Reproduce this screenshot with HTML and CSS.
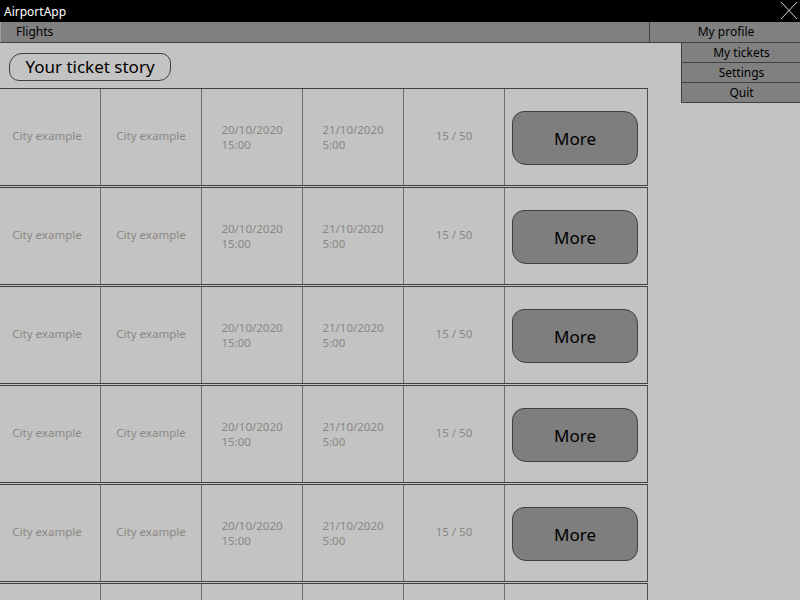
FILE: index.html
```html
<!DOCTYPE html>
<html lang="en">
<head>
<meta charset="utf-8">
<title>AirportApp</title>
<link rel="stylesheet" href="styles.css">
</head>
<body>
<div class="titlebar">
  <span class="app-name">AirportApp</span>
  <svg class="close" width="18" height="19" viewBox="0 0 18 19"><path d="M1 1 L17 18 M17 1 L1 18" stroke="#d8d8d8" stroke-width="1" fill="none"/></svg>
</div>
<div class="menubar">
  <div class="menu-left">Flights</div>
  <div class="menu-profile">My profile</div>
</div>
<div class="dropdown">
  <div class="dd-item">My tickets</div>
  <div class="dd-item">Settings</div>
  <div class="dd-item">Quit</div>
</div>
<main class="content">
  <div class="pill">Your ticket story</div>
  <div class="list">
    <div class="row"><div class="cell first">City example</div><div class="cell">City example</div><div class="cell"><span class="dt">20/10/2020<br>15:00</span></div><div class="cell"><span class="dt">21/10/2020<br>5:00</span></div><div class="cell">15 / 50</div><div class="cell btn-cell"><button class="more">More</button></div></div>
    <div class="row"><div class="cell first">City example</div><div class="cell">City example</div><div class="cell"><span class="dt">20/10/2020<br>15:00</span></div><div class="cell"><span class="dt">21/10/2020<br>5:00</span></div><div class="cell">15 / 50</div><div class="cell btn-cell"><button class="more">More</button></div></div>
    <div class="row"><div class="cell first">City example</div><div class="cell">City example</div><div class="cell"><span class="dt">20/10/2020<br>15:00</span></div><div class="cell"><span class="dt">21/10/2020<br>5:00</span></div><div class="cell">15 / 50</div><div class="cell btn-cell"><button class="more">More</button></div></div>
    <div class="row"><div class="cell first">City example</div><div class="cell">City example</div><div class="cell"><span class="dt">20/10/2020<br>15:00</span></div><div class="cell"><span class="dt">21/10/2020<br>5:00</span></div><div class="cell">15 / 50</div><div class="cell btn-cell"><button class="more">More</button></div></div>
    <div class="row"><div class="cell first">City example</div><div class="cell">City example</div><div class="cell"><span class="dt">20/10/2020<br>15:00</span></div><div class="cell"><span class="dt">21/10/2020<br>5:00</span></div><div class="cell">15 / 50</div><div class="cell btn-cell"><button class="more">More</button></div></div>
    <div class="row"><div class="cell first">City example</div><div class="cell">City example</div><div class="cell"><span class="dt">20/10/2020<br>15:00</span></div><div class="cell"><span class="dt">21/10/2020<br>5:00</span></div><div class="cell">15 / 50</div><div class="cell btn-cell"><button class="more">More</button></div></div>
  </div>
</main>
</body>
</html>
```
FILE: styles.css
```css
html, body {
  margin: 0;
  padding: 0;
  height: 600px;
  overflow: hidden;
}
body {
  background: #c3c3c3;
  font-family: "Noto Sans", "Open Sans", "DejaVu Sans", sans-serif;
  position: relative;
}
.titlebar {
  height: 22px;
  background: #000;
  color: #fff;
  display: flex;
  justify-content: space-between;
  align-items: center;
  padding-left: 4px;
  font-size: 12px;
}
.close {
  margin-right: 2px;
  align-self: flex-start;
  margin-top: 1px;
}
.menubar {
  height: 20px;
  background: #808080;
  border-bottom: 1px solid #404040;
  display: flex;
  font-size: 12px;
  color: #000;
}
.menu-left {
  flex: 1;
  padding-left: 15px;
  line-height: 20px;
  border-left: 1px solid #a0a0a0;
}
.menu-profile {
  width: 151px;
  border-left: 1px solid #404040;
  text-align: center;
  line-height: 20px;
  padding-left: 2px;
  box-sizing: border-box;
}
.dropdown {
  position: absolute;
  top: 43px;
  right: 0;
  width: 118px;
  border-left: 1px solid #404040;
  background: #808080;
  font-size: 12px;
}
.dd-item {
  height: 19px;
  line-height: 20px;
  border-bottom: 1px solid #404040;
  text-align: center;
  padding-left: 1px;
}
.content {
  padding-top: 10px;
}
.pill {
  margin-left: 9px;
  width: 160px;
  height: 26px;
  border: 1px solid #404040;
  border-radius: 13px 10px 12px 10px / 13px 10px 12px 10px;
  font-size: 17px;
  line-height: 26px;
  text-align: center;
  color: #000;
}
.list {
  margin-top: 7px;
  display: flex;
  flex-direction: column;
  gap: 1px;
}
.row {
  width: 647px;
  height: 96px;
  border-top: 1px solid #404040;
  border-bottom: 1px solid #404040;
  border-right: 1px solid #505050;
  display: grid;
  grid-template-columns: 101px 101px 101px 101px 101px 1fr;
}
.cell {
  border-right: 1px solid #6e6e6e;
  display: flex;
  align-items: center;
  justify-content: center;
  font-size: 11.5px;
  color: #8a8783;
  padding-bottom: 3px;
  box-sizing: border-box;
}
.cell.first {
  padding-right: 6px;
}
.dt {
  display: inline-block;
  text-align: left;
  line-height: 15px;
  padding-top: 3px;
}
.btn-cell {
  border-right: none;
  justify-content: flex-start;
  padding: 0 0 0 7px;
}
.more {
  width: 126px;
  height: 54px;
  margin-top: 1px;
  background: #7e7e7e;
  border: 1px solid #404040;
  border-radius: 12px 14px 12px 14px;
  font-family: "Noto Sans", "Open Sans", sans-serif;
  font-size: 17px;
  color: #000;
  padding: 0;
  padding-top: 2px;
}
```
